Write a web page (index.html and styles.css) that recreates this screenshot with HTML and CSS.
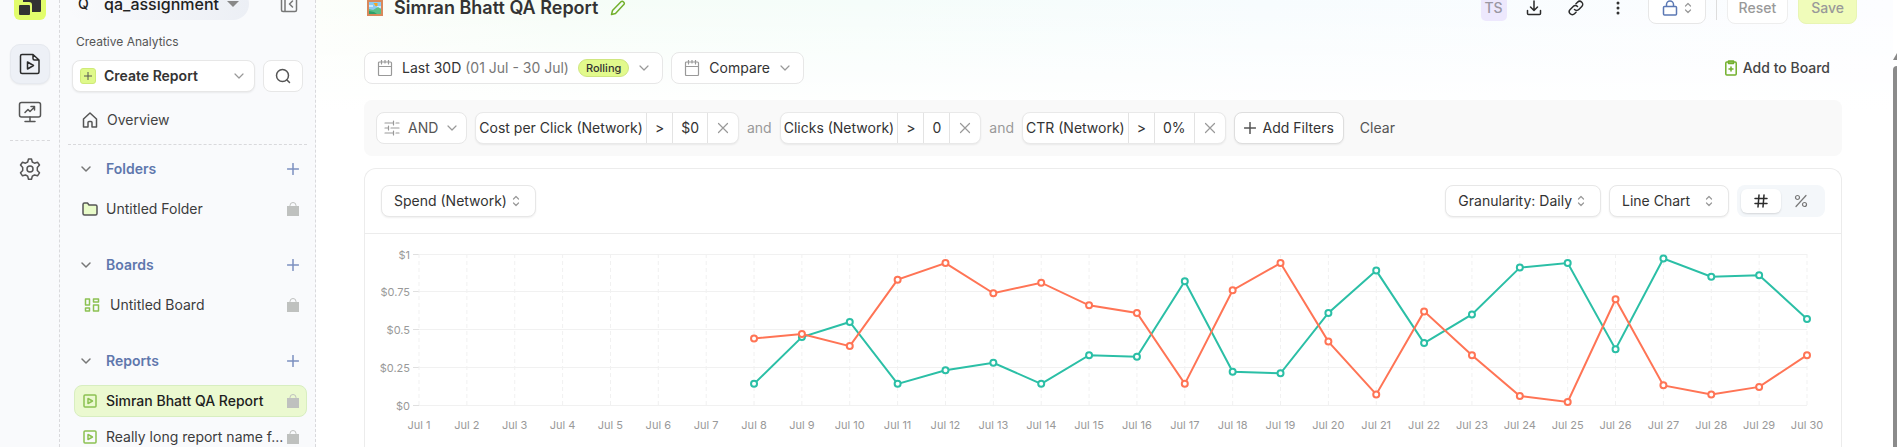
FILE: index.html
```html
<!DOCTYPE html>
<html lang="en">
<head>
<meta charset="utf-8">
<title>Simran Bhatt QA Report</title>
<link rel="stylesheet" href="styles.css">
</head>
<body>
<svg class="sprite" aria-hidden="true">
  <symbol id="chevron" viewBox="0 0 12 12"><path d="M2 4l4 4 4-4"/></symbol>
  <symbol id="updown" viewBox="0 0 8 12"><path d="M1.500 4L4 1.500 6.500 4M1.500 8L4 10.500 6.500 8"/></symbol>
  <symbol id="plus" viewBox="0 0 12 12"><path d="M6 .5v11M.5 6h11"/></symbol>
  <symbol id="cross" viewBox="0 0 12 12"><path d="M1.500 1.500l9 9M10.500 1.500l-9 9"/></symbol>
  <symbol id="calendar" viewBox="0 0 16 16"><path d="M2.500 2h11q1 0 1 1v11.500q0 1-1 1h-11q-1 0-1-1V3q0-1 1-1zM1.500 6.500h13M4.500 0v4M11.500 0v4M8 0v3"/></symbol>
  <symbol id="lock" viewBox="0 0 12 14"><path d="M3 6V3.500a3 3 0 0 1 6 0V6" fill="none" stroke="#bfc1bf"/><path d="M0 4h12v10H0z" fill="#bfc1bf" stroke="none"/></symbol>
  <symbol id="report" viewBox="0 0 14 14"><rect x="1" y="1" width="12" height="12" rx="1"/><path d="M5 4.500v5L9.500 7z"/></symbol>
</svg>
<div class="app">
  <nav class="rail" aria-label="Products">
    <a class="logo" href="#" aria-label="Home"><svg width="32" height="32" viewBox="0 0 32 32"><path d="M9 5h18v18q0 1-1 1h-8v-7q0-3-3-3H9z"/><rect x="5" y="17" width="11" height="10" rx="1"/></svg></a>
    <a class="rail-item active" href="#" aria-label="Creative Analytics"><svg class="icon dark" width="22" height="22" viewBox="0 0 22 22"><path d="M3 1.500h11l6 5.500v12q0 1.500-1.500 1.500H3q-1.500 0-1.500-1.500V3Q1.500 1.500 3 1.500zM14 2v3.500q0 1.500 1.500 1.500H20M8.500 9v7l6-3.500z"/></svg></a>
    <a class="rail-item" href="#" aria-label="Dashboards"><svg class="icon" width="24" height="22" viewBox="0 0 24 22"><rect x="1.500" y="1.500" width="21" height="14.500" rx="2"/><path d="M12 16v4M7 20.500h10M7 11.500l3-3 2 2 4.500-4.500M13 5.500h3.500V9"/></svg></a>
    <hr>
    <a class="rail-item" href="#" aria-label="Settings"><svg class="icon" width="22" height="24" viewBox="0 0 22 24"><path d="M9.500 2h3l.8 3 2.200 1.200 3-.9L20.500 8l-2.200 2.500v3l2.200 2.300-2 3-3-.8-2.200 1.200-.8 3h-3l-.8-3L6.500 18l-3 .8-2-3 2.200-2.300v-3L1.500 8l2-2.700 3 .9L8.700 5z"/><circle cx="11" cy="12" r="3"/></svg></a>
  </nav>
  <aside class="sidebar">
    <div class="workspace">
      <button class="workspace-btn"><span class="initial">Q</span>qa_assignment<span class="caret"></span></button>
      <button class="plain" aria-label="Collapse sidebar"><svg class="icon gray" width="18" height="18" viewBox="0 0 18 18"><rect x="1.500" y="1.500" width="15" height="15" rx="1.500"/><path d="M5 2v14M12.500 6l-3 3 3 3"/></svg></button>
    </div>
    <p class="product">Creative Analytics</p>
    <div class="create-row">
      <button class="box create"><span class="plus-badge"><svg class="icon" width="8" height="8"><use href="#plus"/></svg></span>Create Report<svg class="icon light chev" width="12" height="12"><use href="#chevron"/></svg></button>
      <button class="box search" aria-label="Search"><svg class="icon" width="16" height="16" viewBox="0 0 16 16"><circle cx="7.500" cy="7.500" r="6"/><path d="M12 12l2.500 2.500"/></svg></button>
    </div>
    <a class="overview" href="#"><svg class="icon" width="16" height="16" viewBox="0 0 16 16"><path d="M1.500 7L8 1l6.500 6v8H10v-4.500q0-1-1-1H7q-1 0-1 1V15H1.500z"/></svg>Overview</a>
    <section class="group">
      <h2><svg class="icon gray" width="12" height="12"><use href="#chevron"/></svg>Folders<button class="plain add" aria-label="Add folder"><svg class="icon" width="12" height="12"><use href="#plus"/></svg></button></h2>
      <a class="entry" href="#"><svg class="icon" width="16" height="14" viewBox="0 0 16 14"><path d="M1 2.500Q1 1 2.500 1h3L7 3h6.500Q15 3 15 4.500v7q0 1.500-1.500 1.500h-11Q1 13 1 11.500z" fill="#e9fbc9"/></svg><span>Untitled Folder</span><svg class="lock" width="12" height="14"><use href="#lock"/></svg></a>
    </section>
    <section class="group">
      <h2><svg class="icon gray" width="12" height="12"><use href="#chevron"/></svg>Boards<button class="plain add" aria-label="Add board"><svg class="icon" width="12" height="12"><use href="#plus"/></svg></button></h2>
      <a class="entry board" href="#"><svg class="icon green soft" width="16" height="14" viewBox="0 0 16 14"><path d="M1.500 1h4v6h-4zM9.500 1h5v3h-5zM1.500 10h4v3h-4zM9.500 7h5v6h-5z"/></svg><span>Untitled Board</span><svg class="lock" width="12" height="14"><use href="#lock"/></svg></a>
    </section>
    <section class="group">
      <h2><svg class="icon gray" width="12" height="12"><use href="#chevron"/></svg>Reports<button class="plain add" aria-label="Add report"><svg class="icon" width="12" height="12"><use href="#plus"/></svg></button></h2>
      <a class="entry selected" href="#"><svg class="icon green soft" width="16" height="14"><use href="#report"/></svg><span>Simran Bhatt QA Report</span><svg class="lock" width="12" height="14"><use href="#lock"/></svg></a>
      <a class="entry" href="#"><svg class="icon green soft" width="16" height="14"><use href="#report"/></svg><span>Really long report name f...</span><svg class="lock" width="12" height="14"><use href="#lock"/></svg></a>
    </section>
  </aside>
  <main class="main">
    <header class="topbar">
      <svg class="picture" width="16" height="16" viewBox="0 0 16 16"><path fill="#d9895c" d="M0 0h16v16H0z"/><path fill="#8ccbf5" d="M2 2h12v12H2z"/><path fill="#cdeafc" d="M2 5h4v2H2zM10 6h4v2h-4z"/><path d="M6.500 3h4v3h-2z" fill="#f5a623"/><path fill="#5cc08a" d="M2 9l4 1 5-3 3 2v5H2z"/><path fill="#2fa06b" d="M2 11l5 1 3 2H2z"/></svg>
      <h1>Simran Bhatt QA Report</h1>
      <button class="plain edit" aria-label="Rename"><svg class="icon green" width="16" height="16" viewBox="0 0 16 16"><path d="M1.500 14.500l1-4 8.500-8.700q1.200-1.200 2.600.2t.2 2.600L5.500 13.500z"/></svg></button>
      <div class="tools">
        <span class="avatar">TS</span>
        <button class="plain" aria-label="Download"><svg class="icon dark" width="16" height="16" viewBox="0 0 16 16"><path d="M8 1v9M4.500 7L8 10.500 11.500 7M1.500 10.500v3q0 1 1 1h11q1 0 1-1v-3"/></svg></button>
        <button class="plain" aria-label="Copy link"><svg class="icon dark" width="16" height="16" viewBox="0 0 16 16"><path d="M6.500 9.500a3 3 0 0 0 4.300 0l3-3a3 3 0 0 0-4.300-4.300L8 3.700M9.500 6.500a3 3 0 0 0-4.300 0l-3 3a3 3 0 0 0 4.300 4.300L8 12.300"/></svg></button>
        <button class="plain" aria-label="More"><svg width="16" height="16" viewBox="0 0 16 16" fill="#333"><circle cx="8" cy="3" r="1.500"/><circle cx="8" cy="8" r="1.500"/><circle cx="8" cy="13" r="1.500"/></svg></button>
        <button class="box privacy" aria-label="Privacy"><svg class="icon blue" width="16" height="16" viewBox="0 0 16 16"><rect x="1.500" y="6.500" width="13" height="8.500" rx="1"/><path d="M4.500 6V4.500a3.500 3.500 0 0 1 7 0V6"/></svg><svg class="icon light" width="8" height="12"><use href="#updown"/></svg></button>
        <span class="divider"></span>
        <button class="box reset" disabled>Reset</button>
        <button class="box save" disabled>Save</button>
      </div>
    </header>
    <div class="content">
      <div class="dates">
        <button class="box date"><svg class="icon light" width="16" height="16"><use href="#calendar"/></svg><span>Last 30D <span class="muted">(01 Jul - 30 Jul)</span></span><span class="badge">Rolling</span><svg class="icon light" width="12" height="12"><use href="#chevron"/></svg></button>
        <button class="box date"><svg class="icon light" width="16" height="16"><use href="#calendar"/></svg><span>Compare</span><svg class="icon light" width="12" height="12"><use href="#chevron"/></svg></button>
        <button class="plain add-board"><svg class="icon green" width="12" height="16" viewBox="0 0 12 16"><rect x=".8" y="2" width="10.400" height="13" rx="1"/><path d="M3.500 1h5v2.500h-5zM6 7v4M4 9h4"/></svg>Add to Board</button>
      </div>
      <div class="filters">
        <button class="box operator"><svg class="icon light" width="16" height="16" viewBox="0 0 16 16"><path d="M1 3h8M12 3h3M9.500 1v4M1 8h3M7 8h8M4.500 6v4M1 13h8M12 13h3M9.500 11v4"/></svg>AND<svg class="icon light" width="12" height="12"><use href="#chevron"/></svg></button>
        <div class="pill"><button>Cost per Click (Network)</button><button>&gt;</button><button>$0</button><button aria-label="Remove"><svg class="icon light" width="12" height="12"><use href="#cross"/></svg></button></div>
        <span class="join">and</span>
        <div class="pill"><button>Clicks (Network)</button><button>&gt;</button><button>0</button><button aria-label="Remove"><svg class="icon light" width="12" height="12"><use href="#cross"/></svg></button></div>
        <span class="join">and</span>
        <div class="pill"><button>CTR (Network)</button><button>&gt;</button><button>0%</button><button aria-label="Remove"><svg class="icon light" width="12" height="12"><use href="#cross"/></svg></button></div>
        <button class="box add-filter"><svg class="icon" width="12" height="12"><use href="#plus"/></svg>Add Filters</button>
        <button class="plain clear">Clear</button>
      </div>
      <section class="card">
        <div class="card-head">
          <button class="box metric">Spend (Network)<svg class="icon light" width="8" height="12"><use href="#updown"/></svg></button>
          <button class="box metric granularity">Granularity: Daily<svg class="icon light" width="8" height="12"><use href="#updown"/></svg></button>
          <button class="box metric kind">Line Chart<svg class="icon light" width="8" height="12"><use href="#updown"/></svg></button>
          <div class="toggle"><button class="on" aria-label="Number"><svg class="icon dark" width="14" height="14" viewBox="0 0 14 14"><path d="M5 1L4 13M10 1L9 13M1 4.500h12M1 9.500h12"/></svg></button><button aria-label="Percent"><svg class="icon light percent" width="14" height="14" viewBox="0 0 14 14"><circle cx="3.500" cy="3.500" r="2"/><circle cx="10.500" cy="10.500" r="2"/><path d="M12 1.500l-10 11"/></svg></button></div>
        </div>
        <svg class="chart" id="chart" role="img" aria-label="Daily spend by network"></svg>
      </section>
    </div>
  </main>
  <div class="scroll" aria-hidden="true"><i></i><b></b></div>
</div>
<script src="chart.js"></script>
</body>
</html>
```

FILE: styles.css
```css
* { box-sizing: border-box; }
body { margin: 0; height: 100vh; overflow: hidden; font: 14px/20px Inter, "Liberation Sans", sans-serif; color: #333; background: #fff; }
button { font: inherit; color: inherit; margin: 0; padding: 0; border: 0; background: none; }
a { color: inherit; text-decoration: none; }
h1, h2, p { margin: 0; }
.sprite { position: absolute; width: 0; height: 0; }
svg { flex: none; display: block; }
.icon { fill: none; stroke: #555; stroke-width: 1.5; stroke-linejoin: round; stroke-linecap: round; }
.icon.dark { stroke: #2b2b2b; }
.icon.gray { stroke: #777; }
.icon.light { stroke: #999; stroke-width: 1.2; }
.icon.percent { stroke: #777; }
.icon.green { stroke: #72b02c; }
.icon.soft { stroke: #8cc152; }
.icon.blue { stroke: #5b78b4; }
.app { display: grid; grid-template-columns: 60px 256px 1fr 4px; grid-template-rows: 100%; height: 100vh; }
.plain { display: flex; align-items: center; }
.box { display: flex; align-items: center; height: 32px; border: 1px solid #e7e7e7; border-radius: 8px; background: #fff; white-space: nowrap; }

.rail { display: flex; flex-direction: column; align-items: center; background: #f9fafc; border-right: 1px dashed #d9d9dc; }
.logo { width: 32px; height: 32px; margin-top: -12px; border-radius: 6px; background: #e2fd6c; }
.logo svg { fill: #333; }
.rail-item { display: grid; place-items: center; width: 40px; height: 40px; border-radius: 10px; margin-bottom: 8px; }
.rail-item.active { margin-top: 24px; background: #edf0f6; border: 1px solid #e6e9ef; box-shadow: 0 1px 2px #0001; }
.rail hr { width: 40px; margin: 0 0 8px; border: 0; border-top: 1px dashed #d9d9dc; }

.sidebar { background: #f9fafc; border-right: 1px dashed #d9d9dc; min-width: 0; overflow: hidden; }
.workspace { display: flex; align-items: center; justify-content: space-between; margin: -12px 17px 0 8px; }
.workspace-btn { display: flex; align-items: center; height: 32px; width: 181px; padding: 0 10px; border-radius: 16px; background: linear-gradient(90deg, #f9fafc, #eceff5); font-size: 16px; font-weight: 500; color: #222; }
.initial { width: 26px; text-align: left; font-size: 14px; }
.caret { margin-left: 8px; border: 6px solid transparent; border-top-color: #888; border-bottom: 0; }
.product { padding: 12px 16px 0; font-size: 12px; color: #555; }
.create-row { display: flex; gap: 8px; margin: 8px 12px 0; }
.create { flex: 1; padding: 0 9px 0 7px; font-weight: 600; box-shadow: 0 1px 2px #0001; }
.plus-badge { display: grid; place-items: center; width: 16px; height: 16px; margin-right: 8px; border-radius: 3px; background: #dff98a; border: 1px solid #cfea78; }
.chev { margin-left: auto; }
.search { width: 40px; justify-content: center; }
.overview { display: flex; align-items: center; gap: 9px; height: 53px; margin: 0 8px; padding: 4px 14px 0; border-bottom: 1px dashed #d9d9dc; color: #444; }
.group { padding: 8px 8px 0 14px; margin-bottom: 16px; }
.group h2 { display: flex; align-items: center; height: 32px; padding: 0 8px 0 6px; font-size: 14px; font-weight: 600; color: #5f77ad; }
.group h2 > svg { margin-right: 14px; }
.add { margin-left: auto; }
.add .icon { stroke: #7c90c0; }
.entry { display: flex; align-items: center; gap: 8px; height: 32px; padding: 0 7px; border: 1px solid transparent; border-radius: 8px; margin-bottom: 4px; color: #3c3c3c; }
.entry span { flex: 1; min-width: 0; overflow: hidden; text-overflow: ellipsis; white-space: nowrap; }
.entry .lock { margin-left: -8px; }
.group h2 + .entry { margin-top: 8px; }
.entry.board { padding-left: 9px; gap: 10px; }
.entry.selected { background: #ebf9d0; border-color: #d8eec0; font-weight: 500; color: #1e1e1e; }

.main { display: flex; flex-direction: column; min-width: 0; overflow: hidden; background: linear-gradient(180deg, #fff0, #fff 110px), linear-gradient(90deg, #fcfefa, #f6fdf7 15%, #f5fdfa 35%, #f7fcfe 60%, #fcfdff); }
.topbar { display: flex; align-items: center; height: 32px; margin-top: -8px; padding: 0 36px 0 51px; }
.topbar h1 { margin: 0 12px 0 11px; font-size: 18px; line-height: 24px; font-weight: 600; color: #333; }
.tools { display: flex; align-items: center; gap: 26px; margin-left: auto; }
.avatar { display: grid; place-items: center; width: 26px; height: 26px; margin-right: -7px; border-radius: 5px; background: #ede8fd; color: #9a97a3; font-weight: 500; }
.privacy { width: 58px; justify-content: center; gap: 6px; margin-left: -4px; }
.divider { width: 1px; height: 24px; margin: 0 -16px; background: #ddd; }
.reset { padding: 0 11px; margin-right: -16px; color: #999; border-color: #eee; font-weight: 500; }
.save { padding: 0 12px; border-color: #e8f5b4; background: #f0fcba; color: #999; font-weight: 500; }
.content { display: flex; flex-direction: column; flex: 1; padding: 28px 51px 0 48px; }
.dates { display: flex; align-items: center; gap: 8px; }
.date { padding: 0 12px; gap: 9px; }
.muted { color: #777; }
.badge { padding: 0 7px; border: 1px solid #cfe680; border-radius: 9px; background: #e2fa8c; font-size: 11px; line-height: 16px; font-weight: 500; }
.add-board { margin-left: auto; margin-right: 12px; gap: 6px; font-weight: 500; color: #444; }
.filters { display: flex; align-items: center; gap: 8px; margin: 16px 0 12px; padding: 12px; border-radius: 8px; background: #f9f9f9; }
.operator { padding: 0 8px 0 7px; gap: 8px; color: #555; }
.pill { display: flex; height: 32px; border: 1px solid #e9e9e9; border-radius: 8px; background: #fff; box-shadow: 0 1px 2px #0001; white-space: nowrap; }
.pill button { display: flex; align-items: center; padding: 0 8px; }
.pill button + button { border-left: 1px solid #e3e3e3; }
.pill button:first-child { padding: 0 3px; }
.pill button:last-child { padding: 0 9px; }
.join { color: #999; }
.add-filter { padding: 0 9px; gap: 7px; border-color: #dedede; box-shadow: 0 1px 2px #0001; }
.clear { margin-left: 8px; color: #555; }
.card { flex: 1; border: 1px solid #ececec; border-bottom: 0; border-radius: 12px 12px 0 0; background: #fff; }
.card-head { display: flex; gap: 8px; padding: 16px; border-bottom: 1px solid #ececec; }
.metric { padding: 0 15px 0 12px; gap: 5px; box-shadow: 0 1px 2px #0001; }
.granularity { margin-left: auto; }
.kind { width: 120px; justify-content: space-between; }
.toggle { display: flex; padding: 4px; border-radius: 8px; background: #f4f7fa; }
.toggle button { display: grid; place-items: center; width: 40px; border-radius: 6px; }
.toggle .on { background: #fff; box-shadow: 0 1px 2px #0002; }
.chart { width: 100%; height: 210px; font-size: 11px; fill: #999; }
.grid line { stroke: #f1f1f1; stroke-width: 1; }
.grid .v { stroke-dasharray: 4 3; }
.grid .tick { stroke: #e0e0e0; }
.teal { stroke: #2bbfa6; }
.coral { stroke: #ff7455; }
.series path { fill: none; stroke-width: 2; }
.series circle { fill: #fff; stroke-width: 2; }

.scroll { display: flex; flex-direction: column; gap: 6px; padding-top: 53px; }
.scroll i { height: 7px; background: #888; clip-path: polygon(100% 0, 100% 100%, 0 100%); }
.scroll b { flex: 1; background: #8b8b8b; border-radius: 4px 0 0 0; }
```

FILE: chart.js
```js
const chart = document.getElementById('chart');
const FIRST_DAY = 8;
const series = {
  teal: [14, 45, 55, 14, 23, 28, 14, 33, 32, 82, 22, 21, 61, 89, 41, 60, 91, 94, 37, 97, 85, 86, 57],
  coral: [44, 47, 39, 83, 94, 74, 81, 66, 61, 14, 76, 94, 42, 7, 62, 33, 6, 2, 70, 13, 7, 12, 33]
};

function draw() {
  const left = 54, right = chart.clientWidth - 34, top = 20, bottom = 171;
  const x = day => left + (right - left) * (day - 1) / 29;
  const y = cents => bottom - (bottom - top) * cents / 100;
  let out = '<g class="grid">';
  [[100, '$1'], [75, '$0.75'], [50, '$0.5'], [25, '$0.25'], [0, '$0']].forEach(([v, label]) => {
    const py = Math.floor(y(v)) + 0.5;
    out += `<line x1="${left}" x2="${right}" y1="${py}" y2="${py}"/><line class="tick" x1="${left - 6}" x2="${left}" y1="${py}" y2="${py}"/>`;
    out += `<text x="${left - 9}" y="${py + 4}" text-anchor="end">${label}</text>`;
  });
  for (let d = 1; d <= 30; d++) {
    out += `<line class="v" x1="${x(d)}" x2="${x(d)}" y1="${top}" y2="${bottom}"/>`;
    out += `<text x="${x(d)}" y="195" text-anchor="middle">Jul ${d}</text>`;
  }
  out += '</g>';
  for (const [name, values] of Object.entries(series)) {
    const pts = values.map((v, i) => [x(FIRST_DAY + i), y(v)]);
    out += `<g class="series ${name}"><path d="M${pts.map(p => p.join(' ')).join('L')}"/>`;
    out += pts.map(p => `<circle cx="${p[0]}" cy="${p[1]}" r="3"/>`).join('') + '</g>';
  }
  chart.innerHTML = out;
}

draw();
window.addEventListener('resize', draw);
```
